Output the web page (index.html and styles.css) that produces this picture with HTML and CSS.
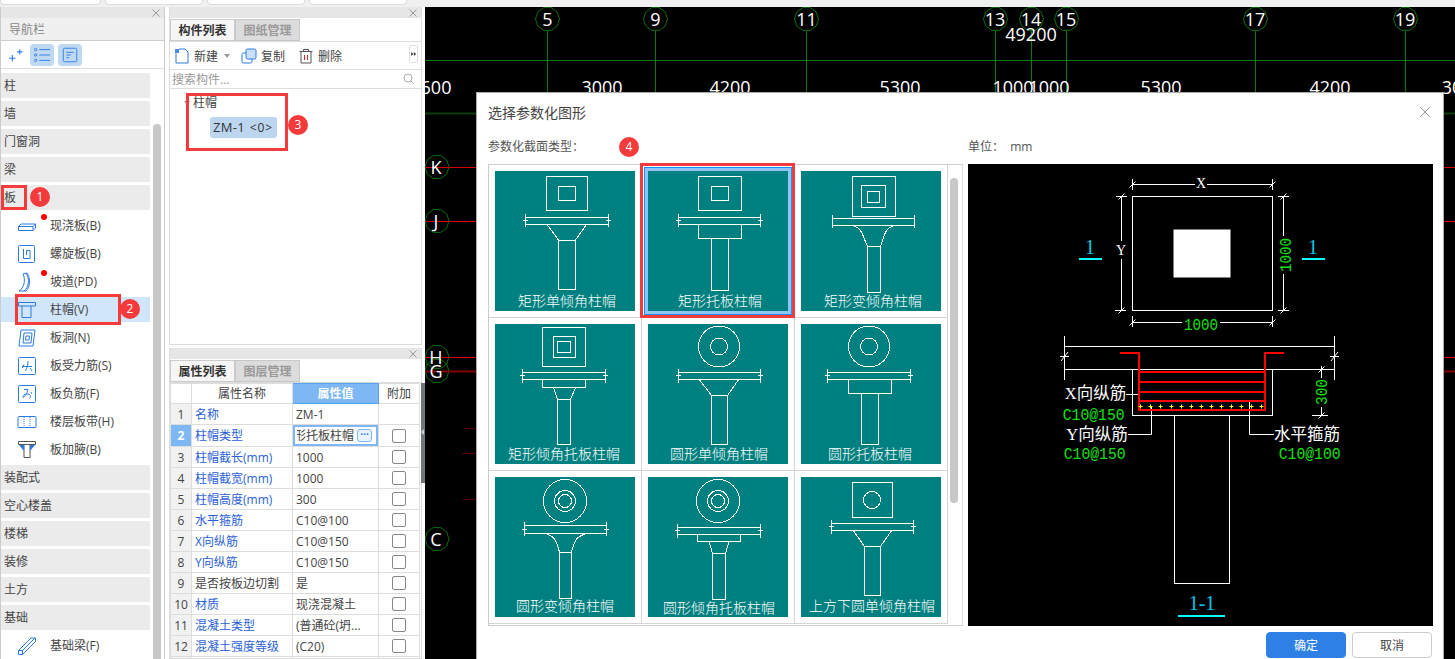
FILE: index.html
```html
<!DOCTYPE html>
<html lang="zh">
<head>
<meta charset="utf-8">
<title>选择参数化图形</title>
<link rel="stylesheet" href="styles.css">
</head>
<body>
<svg class="defs" width="0" height="0">
  <defs>
    <polygon id="bub" points="12,0 9.7,7.05 3.7,11.4 -3.7,11.4 -9.7,7.05 -12,0 -9.7,-7.05 -3.7,-11.4 3.7,-11.4 9.7,-7.05"/>
    <path id="dot" d="M-2 0H2M0 -2V2"/>
    <path id="tick" d="M-3 3L3 -3"/>
    <path id="cross" d="M0.500 0.500L7.500 7.500M7.500 0.500L0.500 7.500"/>
  </defs>
</svg>
<div class="app">
  <div class="topstrip">
    <span class="toptab t0"></span><span class="toptab"></span><span class="toptab"></span><span class="toptab"></span>
  </div>
  <div class="main">
    <aside class="nav">
      <div class="panelbar"><svg class="x" viewBox="0 0 8 8"><use href="#cross"/></svg></div>
      <div class="navtitle">导航栏</div>
      <div class="navtools">
        <svg class="spark" viewBox="0 0 16 16"><path d="M2 11.500h6M5 8.500v6M9.500 5.500h5M12 3v5"/></svg>
        <span class="toolbtn w24"><svg viewBox="0 0 20 20"><circle cx="3" cy="4" r="1.300"/><circle cx="3" cy="10" r="1.300"/><circle cx="3" cy="16" r="1.300"/><path d="M7 4h12M7 10h12M7 16h12"/></svg></span>
        <span class="toolbtn"><svg viewBox="0 0 20 20"><rect x="2.500" y="2.500" width="15" height="15" rx="1.500"/><path d="M6 7h8M6 10h5M6 13h3"/></svg></span>
      </div>
      <div class="navbody">
        <div class="navlist">
          <div class="group">柱</div>
          <div class="group">墙</div>
          <div class="group">门窗洞</div>
          <div class="group">梁</div>
          <div class="group">板</div>
          <div class="item"><svg viewBox="0 0 20 20"><path d="M1.500 10.500L4 8H18.500V12L16 14.500H1.500zM1.500 10.500H16V14.500M16 10.500L18.500 8"/></svg>现浇板(B)<i class="dot"></i></div>
          <div class="item"><svg viewBox="0 0 20 20"><rect x="1.500" y="1.500" width="16" height="17" rx="1"/><path d="M6.500 5v9.500h6.500V6.500H9.500V11"/></svg>螺旋板(B)</div>
          <div class="item"><svg viewBox="0 0 20 20"><path d="M2 19C7 16 9 8 6 2L10 1C14 7 13 15 9 19zM7 19C12 15 13 7 9 1"/></svg>坡道(PD)<i class="dot"></i></div>
          <div class="item on"><svg viewBox="0 0 20 20"><path d="M1.500 2.500H18.500V6H1.500zM5 6V17.500H14V6"/></svg>柱帽(V)</div>
          <div class="item"><svg viewBox="0 0 20 20"><path d="M4 2H18L16 18H2zM7 5H15L14 15H6z"/><path d="M9 8H12.500L12 12H8.500z"/></svg>板洞(N)</div>
          <div class="item"><svg viewBox="0 0 20 20"><rect x="1.500" y="1.500" width="17" height="17" rx="1"/><path d="M5 10.500H15M11 5C11 9 10 13 8 15M13 12L15 15M7 8.500L5.500 12"/></svg>板受力筋(S)</div>
          <div class="item"><svg viewBox="0 0 20 20"><rect x="1.500" y="1.500" width="17" height="17" rx="1"/><path d="M7 5.500H11C10 9 8 13 6 13.500C5 12 8 9.500 11 10C14 10.500 14 13 12.500 14.500M14 8L15 10"/></svg>板负筋(F)</div>
          <div class="item"><svg viewBox="0 0 20 20"><rect x="1" y="4.500" width="18" height="11" rx="1"/><path class="dash" d="M7 5V15M13 5V15"/></svg>楼层板带(H)</div>
          <div class="item"><svg viewBox="0 0 20 20"><path class="grey" d="M1.500 1.500H18.500V4.500H1.500zM7 4.500V17.500H13V4.500"/><path class="solid" d="M2 5H7V11zM18 5H13V11z"/></svg>板加腋(B)</div>
          <div class="group">装配式</div>
          <div class="group">空心楼盖</div>
          <div class="group">楼梯</div>
          <div class="group">装修</div>
          <div class="group">土方</div>
          <div class="group">基础</div>
          <div class="item"><svg viewBox="0 0 20 20"><path d="M1.500 14.500L14 2H18.500V5.500L5.500 18.500H1.500zM1.500 14.500H5.500V18.500M5.500 14.500L18 2"/></svg>基础梁(F)</div>
        </div>
        <div class="navscroll"></div>
      </div>
    </aside>

    <div class="midcol">
      <section class="panel upper">
        <div class="panelbar"><svg class="x" viewBox="0 0 8 8"><use href="#cross"/></svg></div>
        <div class="tabs"><span class="tab active">构件列表</span><span class="tab">图纸管理</span></div>
        <div class="actions">
          <svg class="aicon" viewBox="0 0 16 16"><path d="M2 5V15H14V4L11 1H5"/><path class="sq" d="M1 1h4v4H1z"/></svg><span class="atext">新建</span><span class="caret"></span>
          <svg class="aicon i2" viewBox="0 0 16 16"><rect class="fillb" x="5" y="1" width="10" height="10" rx="1.500"/><path d="M5 5H2.500A1.500 1.500 0 0 0 1 6.500V13.500A1.500 1.500 0 0 0 2.500 15H9.500A1.500 1.500 0 0 0 11 13.500V11"/></svg><span class="atext">复制</span>
          <svg class="aicon i3 dk" viewBox="0 0 16 16"><path d="M1.500 3.500H14.500M5.500 3.500V1.500H10.500V3.500M3 3.500V15H13V3.500"/><path class="red" d="M6.500 7V12M9.500 7V12"/></svg><span class="atext">删除</span>
          <svg class="more" viewBox="0 0 9 18"><path d="M1.500 6.500L4.500 9L1.500 11.500zM5 6.500L8 9L5 11.500z"/></svg>
        </div>
        <div class="search"><span>搜索构件...</span><svg viewBox="0 0 12 12"><circle cx="5" cy="5" r="4"/><path d="M8 8L11 11"/></svg></div>
        <div class="tree">
          <div class="treehead"><span class="arrow"></span>柱帽</div>
          <div class="chip">ZM-1 <small>&lt;0&gt;</small></div>
        </div>
      </section>
      <section class="panel lower">
        <div class="panelbar"><svg class="x" viewBox="0 0 8 8"><use href="#cross"/></svg></div>
        <div class="tabs"><span class="tab active">属性列表</span><span class="tab">图层管理</span></div>
        <div class="tablewrap">
        <table class="props">
          <colgroup><col class="c1"><col class="c2"><col class="c3"><col class="c4"></colgroup>
          <tr class="head"><th class="n"></th><th>属性名称</th><th class="hv">属性值</th><th>附加</th></tr>
          <tr><td class="n">1</td><td class="bl">名称</td><td>ZM-1</td><td></td></tr>
          <tr><td class="n sel">2</td><td class="bl">柱帽类型</td><td class="edit"><div class="editbox"><span class="clip"><span>矩形托板柱帽</span></span><span class="dots">···</span></div></td><td class="cb"><i></i></td></tr>
          <tr><td class="n">3</td><td class="bl">柱帽截长(mm)</td><td>1000</td><td class="cb"><i></i></td></tr>
          <tr><td class="n">4</td><td class="bl">柱帽截宽(mm)</td><td>1000</td><td class="cb"><i></i></td></tr>
          <tr><td class="n">5</td><td class="bl">柱帽高度(mm)</td><td>300</td><td class="cb"><i></i></td></tr>
          <tr><td class="n">6</td><td class="bl">水平箍筋</td><td>C10@100</td><td class="cb"><i></i></td></tr>
          <tr><td class="n">7</td><td class="bl">X向纵筋</td><td>C10@150</td><td class="cb"><i></i></td></tr>
          <tr><td class="n">8</td><td class="bl">Y向纵筋</td><td>C10@150</td><td class="cb"><i></i></td></tr>
          <tr><td class="n">9</td><td>是否按板边切割</td><td>是</td><td class="cb"><i></i></td></tr>
          <tr><td class="n">10</td><td class="bl">材质</td><td>现浇混凝土</td><td class="cb"><i></i></td></tr>
          <tr><td class="n">11</td><td class="bl">混凝土类型</td><td>(普通砼(坍...</td><td class="cb"><i></i></td></tr>
          <tr><td class="n">12</td><td class="bl">混凝土强度等级</td><td>(C20)</td><td class="cb"><i></i></td></tr>
          <tr><td class="n"></td><td></td><td></td><td></td></tr>
        </table>
        </div>
      </section>
    </div>
    <div class="splitter"><span class="grip"></span></div>

    <main class="canvas">
      <svg class="cad" viewBox="425 7 1030 652" width="1030" height="652">
        <g class="g">
          <path d="M425 60.500H1455"/>
          <path d="M547.500 31V92M655.500 31V92M806.500 31V92M995.500 31V92M1031.500 31V92M1066.500 31V92M1255.500 31V92M1405.500 31V92"/>
          <use href="#bub" x="547.500" y="19"/><use href="#bub" x="655.500" y="19"/><use href="#bub" x="806.500" y="19"/><use href="#bub" x="995.500" y="19"/><use href="#bub" x="1031.500" y="19"/><use href="#bub" x="1066.500" y="19"/><use href="#bub" x="1255.500" y="19"/><use href="#bub" x="1405.500" y="19"/>
          <use href="#bub" x="437" y="167"/><use href="#bub" x="437" y="221"/><use href="#bub" x="437" y="357"/><use href="#bub" x="437" y="371"/><use href="#bub" x="437" y="539"/>
        </g>
        <path class="dg" d="M425 113.500H1455"/>
        <path class="r" d="M425 167.500H1455M425 221.500H1455M425 357.500H1455"/>
        <path class="dr" d="M425 371.500H1455"/>
        <path class="dr1" d="M464 428.500H476M462 453.500H476M463 499.500H476"/>
        <g class="num">
          <text x="547.500" y="26">5</text><text x="655.500" y="26">9</text><text x="806.500" y="26">11</text><text x="995" y="26">13</text><text x="1031" y="26">14</text><text x="1066" y="26">15</text><text x="1255" y="26">17</text><text x="1405" y="26">19</text>
          <text x="1031" y="41">49200</text>
          <text x="436" y="94">600</text><text x="602" y="94">3000</text><text x="730" y="94">4200</text><text x="900" y="94">5300</text><text x="1013" y="94">1000</text><text x="1049" y="94">1000</text><text x="1161" y="94">5300</text><text x="1330" y="94">4200</text><text x="1452" y="94">30</text>
          <text x="436" y="174">K</text><text x="436" y="228">J</text><text x="436" y="364">H</text><text x="436" y="378">G</text><text x="436" y="546">C</text>
        </g>
      </svg>

      <div class="dialog">
        <div class="dtitle"><span>选择参数化图形</span><svg class="dclose" viewBox="0 0 12 12"><path d="M1 1L11 11M11 1L1 11"/></svg></div>
        <div class="dlabels"><span class="l1">参数化截面类型：</span><span>单位：&nbsp;&nbsp;mm</span></div>
        <div class="dbody">
          <div class="gallery">
            <div class="cell">
              <svg class="tile" viewBox="0 0 140 140"><rect x="51.500" y="5.500" width="41" height="34"/><rect x="63.500" y="15.500" width="17" height="14"/><path d="M30.500 46.500H113.500M30.500 53.500H113.500M30.500 43V56M113.500 43V56M28 49.500H33M111 49.500H116M52 53.500L63.500 69M91.500 53.500L80.500 69"/><rect x="63.500" y="69.500" width="17" height="49"/><text x="72" y="135">矩形单倾角柱帽</text></svg>
            </div>
            <div class="cell picked">
              <svg class="tile" viewBox="0 0 140 140"><rect x="50.500" y="5.500" width="43" height="34"/><rect x="63.500" y="15.500" width="17" height="14"/><path d="M30.500 46.500H112.500M30.500 53.500H112.500M30.500 43V56M112.500 43V56M28 49.500H33M110 49.500H115"/><rect x="50.500" y="53.500" width="43" height="14"/><rect x="63.500" y="67.500" width="17" height="52"/><text x="72" y="135">矩形托板柱帽</text></svg>
            </div>
            <div class="cell">
              <svg class="tile" viewBox="0 0 140 140"><rect x="51.500" y="5.500" width="43" height="40"/><rect x="60.500" y="14.500" width="24" height="22"/><rect x="66.500" y="20.500" width="12" height="11"/><path d="M31.500 47.500H113.500M31.500 54.500H113.500M31.500 44V57M113.500 44V57M52 54.500C63 58 62 68 66.500 75M93 54.500C82 58 83 68 79.500 75"/><rect x="66.500" y="75.500" width="13" height="46"/><text x="72" y="135">矩形变倾角柱帽</text></svg>
            </div>
            <div class="cell">
              <svg class="tile" viewBox="0 0 140 140"><rect x="47.500" y="3.500" width="43" height="39"/><rect x="58.500" y="12.500" width="22" height="21"/><rect x="62.500" y="17.500" width="13" height="11"/><path d="M27.500 48.500H110.500M27.500 55.500H110.500M27.500 45V59M110.500 45V59M25 51.500H30M108 51.500H113M58.500 63.500L62.500 75.500M80.500 63.500L75.500 75.500"/><rect x="47.500" y="55.500" width="43" height="8"/><rect x="62.500" y="75.500" width="13" height="45"/><text x="69" y="135">矩形倾角托板柱帽</text></svg>
            </div>
            <div class="cell">
              <svg class="tile" viewBox="0 0 140 140"><circle cx="71" cy="22.500" r="20.500"/><circle cx="71" cy="22.500" r="8.500"/><path d="M30.500 48.500H112.500M30.500 55.500H112.500M30.500 45V59M112.500 45V59M28 51.500H33M110 51.500H115M51.300 55.500L63.500 71.500M90.700 55.500L79.500 71.500"/><rect x="63.500" y="71.500" width="16" height="49"/><text x="71" y="135">圆形单倾角柱帽</text></svg>
            </div>
            <div class="cell">
              <svg class="tile" viewBox="0 0 140 140"><circle cx="68" cy="22.500" r="20.500"/><circle cx="68" cy="22.500" r="8.500"/><path d="M26.500 48.500H109.500M26.500 55.500H109.500M26.500 45V59M109.500 45V59M24 51.500H29M107 51.500H112"/><rect x="47.500" y="55.500" width="43" height="14"/><rect x="60.500" y="69.500" width="17" height="51"/><text x="69" y="135">圆形托板柱帽</text></svg>
            </div>
            <div class="cell">
              <svg class="tile" viewBox="0 0 140 140"><circle cx="70" cy="24" r="21.500"/><circle cx="70" cy="24" r="10.500"/><circle cx="70" cy="24" r="6.500"/><path d="M29.500 48.500H111.500M29.500 56.500H111.500M29.500 45V59M111.500 45V59M27 52.500H32M109 52.500H114M50.500 56.500C61 60 61 64 64.500 75M91.500 56.500C80 60 80 64 76.500 75"/><rect x="64.500" y="75.500" width="12" height="46"/><text x="70" y="134">圆形变倾角柱帽</text></svg>
            </div>
            <div class="cell">
              <svg class="tile" viewBox="0 0 140 140"><circle cx="70" cy="24" r="21.500"/><circle cx="70" cy="24" r="10.500"/><circle cx="70" cy="24" r="6.500"/><path d="M29.500 50.500H112.500M29.500 57.500H112.500M29.500 47V61M112.500 47V61M27 53.500H32M110 53.500H115M61 64.500L64.500 76.500M81 64.500L77.500 76.500"/><rect x="49.500" y="57.500" width="43" height="7"/><rect x="64.500" y="76.500" width="13" height="46"/><text x="71" y="136">圆形倾角托板柱帽</text></svg>
            </div>
            <div class="cell">
              <svg class="tile" viewBox="0 0 140 140"><rect x="51.500" y="5.500" width="40" height="35"/><circle cx="71" cy="23" r="8.500"/><path d="M30.500 46.500H112.500M30.500 53.500H112.500M30.500 43V57M112.500 43V57M28 49.500H33M110 49.500H115M52.300 53.500L63.500 69.500M90.700 53.500L79.500 69.500"/><rect x="63.500" y="69.500" width="16" height="49"/><text x="71" y="134">上方下圆单倾角柱帽</text></svg>
            </div>
            <div class="gscroll"></div>
          </div>
          <div class="preview">
            <svg class="pv" viewBox="0 0 465 462" width="465" height="462">
              <g class="w">
                <rect x="164.500" y="32.500" width="140" height="114"/>
                <rect class="solidw" x="206" y="66" width="56" height="47"/>
                <path d="M164.500 20.500H227M239 20.500H304.500M164.500 15V26M304.500 15V26M153.500 32.500V77M153.500 95V146.500M148 32.500H159M147 146.500H158M315.500 32.500V72M315.500 110V146.500M310 32.500H321M310 146.500H321M164.500 158.500H214M252 158.500H304.500M164.500 152V163M304.500 152V163"/>
                <use href="#tick" x="164.500" y="20.500"/><use href="#tick" x="304.500" y="20.500"/><use href="#tick" x="153.500" y="32.500"/><use href="#tick" x="153.500" y="146.500"/><use href="#tick" x="315.500" y="32.500"/><use href="#tick" x="315.500" y="146.500"/><use href="#tick" x="164.500" y="158.500"/><use href="#tick" x="304.500" y="158.500"/>
                <path d="M96.500 182.500H366.500M96.500 205.500H366.500M96.500 172V216M366.500 172V216M92 192.500H101M362 192.500H371M93 197L100 188M363 197L370 188"/>
                <rect x="164.500" y="205.500" width="140" height="46"/>
                <rect x="206.500" y="251.500" width="55" height="168"/>
                <path d="M158 230.500H170M160 270.500H183.500V243M281.500 237V270.500H306M353.500 202V214M353.500 243V252M344 251.500H360"/>
                <use href="#tick" x="353.500" y="205.500"/><use href="#tick" x="353.500" y="251.500"/>
              </g>
              <path class="rb" d="M152 189H171V246H297V189H316M171 208H297M171 218H297M171 228H297M171 237H297"/>
              <g class="yl"><use href="#dot" x="172.500" y="242.500"/><use href="#dot" x="182.500" y="242.500"/><use href="#dot" x="192.500" y="242.500"/><use href="#dot" x="203.500" y="242.500"/><use href="#dot" x="213.500" y="242.500"/><use href="#dot" x="223.500" y="242.500"/><use href="#dot" x="233.500" y="242.500"/><use href="#dot" x="243.500" y="242.500"/><use href="#dot" x="253.500" y="242.500"/><use href="#dot" x="263.500" y="242.500"/><use href="#dot" x="273.500" y="242.500"/><use href="#dot" x="283.500" y="242.500"/><use href="#dot" x="293.500" y="242.500"/></g>
              <path class="cy" d="M111 95H134M334 95H357M210 452H257"/>
              <g class="tw">
                <text class="ax" x="233" y="24">X</text><text class="ax" x="153" y="91">Y</text>
                <text x="127.500" y="235">X向纵筋</text><text x="129" y="276">Y向纵筋</text><text x="339" y="276">水平箍筋</text>
              </g>
              <g class="tg">
                <text x="216" y="166" textLength="34" lengthAdjust="spacingAndGlyphs">1000</text>
                <text transform="translate(323 108) rotate(-90)" textLength="34" lengthAdjust="spacingAndGlyphs">1000</text>
                <text transform="translate(358.500 241) rotate(-90)" textLength="26" lengthAdjust="spacingAndGlyphs">300</text>
                <text x="94.700" y="256" textLength="62" lengthAdjust="spacingAndGlyphs">C10@150</text>
                <text x="95.700" y="295" textLength="62" lengthAdjust="spacingAndGlyphs">C10@150</text>
                <text x="310.700" y="295" textLength="62" lengthAdjust="spacingAndGlyphs">C10@100</text>
              </g>
              <g class="tc"><text x="122" y="90">1</text><text x="345" y="90">1</text><text x="234" y="446">1-1</text></g>
            </svg>
          </div>
        </div>
        <div class="dfoot"><button class="btn primary">确定</button><button class="btn">取消</button></div>
      </div>
    </main>
  </div>

  <div class="mark m1"></div><div class="badge b1">1</div>
  <div class="mark m2"></div><div class="badge b2">2</div>
  <div class="mark m3"></div><div class="badge b3">3</div>
  <div class="mark m4"></div><div class="badge b4">4</div>
</div>
</body>
</html>
```

FILE: styles.css
```css
* { box-sizing: border-box; }
html, body { margin: 0; padding: 0; height: 100%; overflow: hidden; }
body {
  background: #fff;
  color: #333;
  font: 12px "Open Sans", "Noto Sans CJK SC", sans-serif;
}
.defs { position: absolute; }
.app { position: relative; width: 1455px; height: 659px; display: flex; flex-direction: column; overflow: hidden; }

.topstrip { height: 7px; background: #f0f0f0; display: flex; gap: 4px; flex: none; }
.toptab { width: 98px; height: 5px; background: #fff; border: 1px solid #ddd; border-top: 0; border-radius: 0 0 4px 4px; }
.t0 { width: 101px; }

.main { display: flex; flex: 1; min-height: 0; }

.panelbar { height: 11px; background: #e6e6e6; position: relative; flex: none; }
.x { position: absolute; right: 4px; top: 2px; width: 8px; height: 8px; fill: none; stroke: #999; }

/* navigation */
.nav { width: 165px; flex: none; border-left: 1px solid #ccc; border-right: 1px solid #ccc; display: flex; flex-direction: column; min-height: 0; }
.navtitle { height: 23px; line-height: 24px; padding-left: 8px; background: #f0f0f0; color: #888; font-size: 12px; border-bottom: 1px solid #ccc; flex: none; }
.navtools { height: 28px; display: flex; align-items: center; gap: 4px; padding-left: 6px; border-bottom: 1px solid #ddd; flex: none; }
.spark { width: 17px; height: 17px; margin-right: 2px; fill: none; stroke: #2a7ae2; }
.toolbtn { width: 24px; height: 22px; background: #bfd9f2; border-radius: 4px; display: flex; align-items: center; justify-content: center; }
.toolbtn svg { width: 18px; height: 18px; fill: none; stroke: #2a7ae2; }
.navbody { display: flex; flex: 1; min-height: 0; padding-top: 4px; overflow: hidden; }
.navlist { width: 149px; flex: none; display: flex; flex-direction: column; gap: 3px; }
.group, .item { height: 25px; flex: none; line-height: 25px; color: #444; }
.group { background: #ebebeb; padding-left: 3px; }
.item { position: relative; display: flex; align-items: center; gap: 13px; padding-left: 16px; }
.item svg { width: 20px; height: 20px; fill: none; stroke: #2a7ae2; flex: none; }
.item.on { background: #d2e6fb; }
.item .dash { stroke-dasharray: 1 1; }
.item .grey { stroke: #555; }
.item .solid { fill: #2a7ae2; stroke: none; }
.dot { position: absolute; left: 40px; top: 1px; width: 6px; height: 6px; border-radius: 50%; background: #f00; }
.navscroll { width: 8px; margin: 51px 0 0 3px; background: #c8c8c8; border-radius: 4px 4px 0 0; flex: none; }

/* middle column */
.midcol { width: 253px; margin-left: 4px; flex: none; display: flex; flex-direction: column; gap: 3px; min-height: 0; }
.panel { border: 1px solid #ddd; border-top: 0; display: flex; flex-direction: column; }
.upper { height: 338px; flex: none; }
.lower { flex: 1; min-height: 0; overflow: hidden; }
.tabs { display: flex; height: 24px; padding-top: 1px; border-bottom: 1px solid #ddd; flex: none; }
.tab { width: 65px; line-height: 21px; text-align: center; color: #999; background: #dcdcdc; border: 1px solid #c8c8c8; font-weight: 700; font-size: 12px; }
.tab.active { color: #333; background: #f6f6f6; border-color: #ccc; }
.actions { height: 28px; display: flex; align-items: center; padding-left: 4px; border-bottom: 1px solid #ddd; position: relative; flex: none; }
.aicon { width: 16px; height: 16px; fill: none; stroke: #2a7ae2; flex: none; }
.aicon.dk { stroke: #555; }
.aicon .sq { fill: #4a90e2; stroke: none; }
.aicon .fillb { fill: #c9e0f8; }
.aicon .red { stroke: #e02020; }
.atext { margin-left: 4px; color: #444; }
.caret { width: 0; height: 0; margin: 0 11px 0 6px; border: 3px solid transparent; border-top: 4px solid #999; border-bottom: 0; }
.i3 { margin-left: 13px; }
.i2 { margin-left: 0; }
.more { position: absolute; right: 3px; top: 3px; width: 9px; height: 18px; border: 1px solid #ddd; border-radius: 2px; fill: #444; }
.search { height: 19px; display: flex; justify-content: space-between; align-items: center; padding: 0 6px 0 2px; border-bottom: 1px solid #ddd; color: #999; flex: none; }
.search svg { width: 12px; height: 12px; fill: none; stroke: #aaa; }
.tree { padding: 5px 0 0 14px; color: #444; }
.treehead { height: 18px; line-height: 18px; display: flex; align-items: center; gap: 3px; }
.arrow { width: 0; height: 0; border: 3px solid transparent; border-top: 4px solid #999; border-bottom: 0; }
.chip { width: 67px; height: 21px; margin: 5px 0 0 26px; line-height: 21px; background: #bcd6f0; border-radius: 3px; padding-left: 3px; color: #333; white-space: nowrap; font-size: 13px; letter-spacing: .3px; }
.chip small { font-size: 12px; letter-spacing: 1px; margin-left: 1px; }

/* property table */
.tablewrap { flex: 1; min-height: 0; overflow: hidden; }
.props { border-collapse: collapse; table-layout: fixed; width: 249px; }
.c1 { width: 21px; } .c2 { width: 101px; } .c3 { width: 86px; } .c4 { width: 41px; }
.props th, .props td { height: 21px; padding: 0 3px; border: 1px solid #ddd; font-weight: 400; line-height: 19px; white-space: nowrap; overflow: hidden; color: #444; }
.props .head th { height: 20px; text-align: center; }
.props th.hv { background: #7db8f5; color: #fff; font-weight: 700; border: 1px solid #5aa0ea; }
.props .n { background: #f1f1f1; text-align: center; padding: 0; font-size: 12px; }
.props .head .n { background: #fff; }
.props .n.sel { background: #7db8f5; color: #fff; font-weight: 700; }
.props td.bl { color: #2b5fd9; }
.props td.edit { padding: 0; border: 0; }
.editbox { height: 21px; border: 2px solid #7db8f5; display: flex; align-items: center; padding-left: 2px; }
.clip { display: flex; justify-content: flex-end; width: 57px; overflow: hidden; flex: none; }
.clip span { flex: none; }
.dots { width: 15px; height: 13px; margin-left: 3px; border: 1px solid #7db8f5; border-radius: 3px; background: #eaf3fd; color: #2a7ae2; font-size: 10px; line-height: 9px; text-align: center; font-weight: 700; }
.cb { text-align: center; }
.cb i { display: block; width: 14px; height: 14px; margin: 0 auto; border: 1px solid #888; border-radius: 2px; }

.splitter { width: 3px; flex: none; position: relative; }
.grip { position: absolute; left: -1px; top: 376px; width: 4px; height: 100px; background: #70757c; }
.grip::after { content: ""; position: absolute; left: 0; top: 46px; border: 3px solid transparent; border-right: 3px solid #ccc; border-left: 0; }

/* canvas */
.canvas { position: relative; flex: 1; min-width: 0; background: #000; overflow: hidden; }
.cad { display: block; }
.g { fill: none; stroke: #0a7a0a; }
.g use { stroke: #0a6e0a; }
.dg { stroke: #0d3d0d; stroke-width: 2; fill: none; }
.r { stroke: #d40000; fill: none; }
.dr { stroke: #800000; stroke-width: 2; fill: none; }
.dr1 { stroke: #5a0000; fill: none; }
.num text { fill: #fff; font: 18px "Open Sans", sans-serif; text-anchor: middle; }

/* dialog */
.dialog { position: absolute; left: 51px; top: 85px; width: 968px; height: 567px; background: #fff; border: 1px solid #aaa; border-bottom: 0; padding-left: 11px; display: flex; flex-direction: column; }
.dtitle { height: 39px; padding-bottom: 2px; display: flex; justify-content: space-between; align-items: center; padding-right: 12px; font-size: 14px; color: #444; flex: none; }
.dclose { width: 12px; height: 12px; fill: none; stroke: #999; }
.dlabels { height: 32px; display: flex; align-items: flex-start; padding-top: 5px; font-size: 12px; color: #555; flex: none; }
.l1 { width: 480px; }
.dbody { display: flex; gap: 5px; height: 462px; flex: none; }
.gallery { position: relative; width: 475px; height: 462px; border: 1px solid #ccc; border-right-color: #ddd; display: grid; grid-template-columns: repeat(3, 153px); grid-auto-rows: 153px; align-content: start; }
.cell { padding: 6px; border-right: 1px solid #d4d4d4; border-bottom: 1px solid #d4d4d4; position: relative; }
.cell.picked { padding: 3px; }
.cell.picked .tile { outline: 3px solid #8fc4f5; outline-offset: 0; margin: 3px; box-shadow: 0 0 0 4px #1e90ff; }
.tile { display: block; width: 140px; height: 140px; background: #008080; fill: none; stroke: #fff; shape-rendering: crispEdges; }
.tile text { fill: #fff; stroke: none; font: 14px "Noto Sans CJK SC", sans-serif; font-weight: 300; text-anchor: middle; shape-rendering: auto; }
.gscroll { position: absolute; left: 461px; top: 13px; width: 8px; height: 325px; background: #c8c8c8; border-radius: 4px; }
.preview { width: 465px; height: 462px; background: #000; flex: none; }
.pv { display: block; }
.w { fill: none; stroke: #fff; }
.solidw { fill: #fff; }
.rb { fill: none; stroke: #f00; stroke-width: 2; }
.yl { fill: none; stroke: #ff0; }
.cy { fill: none; stroke: #0ff; stroke-width: 2; }
.tw text { fill: #fff; font: 16.500px "Liberation Serif", "Noto Sans CJK SC", serif; text-anchor: middle; }
.tw .ax { font-size: 14px; }
.tg text { fill: #14e014; font: 16px "Liberation Mono", monospace; }
.tc text { fill: #00c8e8; font: 20px "Liberation Serif", serif; text-anchor: middle; }
.dfoot { flex: 1; display: flex; justify-content: flex-end; gap: 6px; padding: 6px 11px 0 0; }
.btn { width: 80px; height: 26px; border: 1px solid #ccc; border-radius: 4px; background: #fff; color: #444; font: 12px "Open Sans", "Noto Sans CJK SC", sans-serif; padding: 0; }
.btn.primary { background: #2f80e4; border-color: #2f80e4; color: #fff; }

/* annotations */
.mark { position: absolute; border: 3px solid #f43a3a; }
.m1 { left: 1px; top: 185px; width: 26px; height: 25px; }
.m2 { left: 15px; top: 294px; width: 106px; height: 31px; }
.m3 { left: 186px; top: 93px; width: 102px; height: 58px; }
.m4 { left: 640px; top: 163px; width: 155px; height: 155px; }
.badge { position: absolute; width: 20px; height: 20px; border-radius: 50%; background: #f43a3a; color: #fff; text-align: center; line-height: 20px; font-size: 12px; }
.b1 { left: 30px; top: 187px; }
.b2 { left: 120px; top: 299px; }
.b3 { left: 288px; top: 115px; }
.b4 { left: 619px; top: 137px; }
```
